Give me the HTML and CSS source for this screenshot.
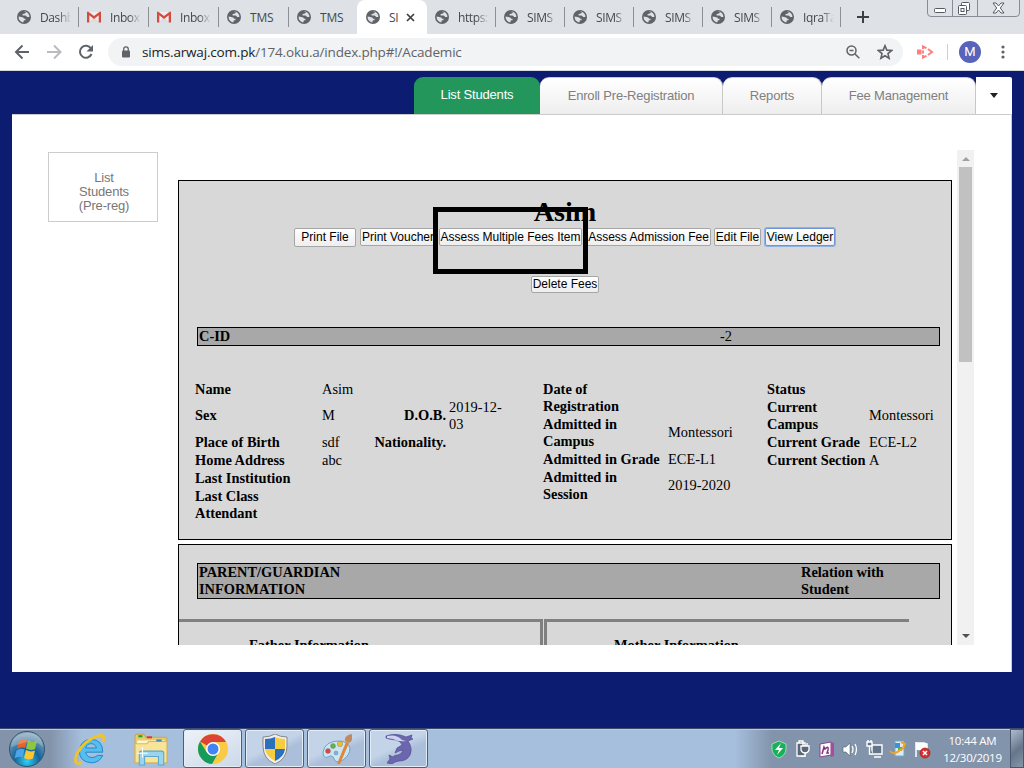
FILE: index.html
```html
<!DOCTYPE html>
<html lang="en">
<head>
<meta charset="utf-8">
<title>SIMS</title>
<link rel="stylesheet" href="styles.css">
</head>
<body>
<svg class="defs" width="0" height="0">
  <symbol id="globe" viewBox="0 0 14 14"><circle cx="7" cy="7" r="7" fill="#5f6368"/><path d="M1.600 6.600 4.300 6.900q2.300 0 2.900 1.900h1.300v1.400H6.900L6.300 12.500A5.600 5.600 0 0 1 1.600 6.600zM6.600 1.500h2.200v1.300L7.300 3.700 5.600 4.100v1.300h2.700q1.400.2 1.700 1.500h2.400a5.500 5.500 0 0 0-3.300-5z" fill="#dee1e6"/></symbol>
  <symbol id="gmail" viewBox="0 0 14 12"><path d="M1 1h12v10H1z" fill="#eee"/><path d="M2 11l5-5 5 5z" fill="#ddd"/><path d="M0 1.3Q0 .4 1 .4L7 5l6-4.6q1 0 1 .9V11.500h-2.300V4.300L7 7.900 2.300 4.300v7.200H0z" fill="#d54b3d"/></symbol>
</svg>
<header class="tabstrip">
  <div class="tab"><svg class="fav"><use href="#globe"/></svg><span>Dashb</span></div>
  <div class="tab"><svg class="fav mail"><use href="#gmail"/></svg><span>Inbox</span></div>
  <div class="tab"><svg class="fav mail"><use href="#gmail"/></svg><span>Inbox</span></div>
  <div class="tab"><svg class="fav"><use href="#globe"/></svg><span class="full">TMS</span></div>
  <div class="tab before"><svg class="fav"><use href="#globe"/></svg><span class="full">TMS</span></div>
  <div class="tab active"><svg class="fav"><use href="#globe"/></svg><span class="short">SI</span><svg class="close" viewBox="0 0 9 9"><path d="M1 1l7 7M8 1L1 8" stroke="#3c4043" stroke-width="1.700"/></svg></div>
  <div class="tab narrow"><svg class="fav"><use href="#globe"/></svg><span>https:</span></div>
  <div class="tab narrow"><svg class="fav"><use href="#globe"/></svg><span>SIMS</span></div>
  <div class="tab narrow"><svg class="fav"><use href="#globe"/></svg><span>SIMS</span></div>
  <div class="tab narrow"><svg class="fav"><use href="#globe"/></svg><span>SIMS</span></div>
  <div class="tab narrow"><svg class="fav"><use href="#globe"/></svg><span>SIMS</span></div>
  <div class="tab narrow"><svg class="fav"><use href="#globe"/></svg><span>IqraTa</span></div>
  <svg class="plus" viewBox="0 0 12 12"><path d="M6 0v12M0 6h12" stroke="#3c4043" stroke-width="2"/></svg>
  <svg class="winctl" viewBox="0 0 93 17"><path d="M.5 0v13q0 3.500 3.500 3.500h85q3.500 0 3.500-3.500V0M25.500 0v16M50.500 0v16" fill="none" stroke="#878c96"/><g fill="#fff" stroke="#555a63"><rect x="7.500" y="8.500" width="11" height="4" rx="1"/><rect x="34.500" y="2.500" width="8" height="8" rx="1"/><rect x="31.500" y="5.500" width="8" height="9" rx="1"/><rect x="34" y="8.500" width="3" height="3"/><path d="M66 3h3l2.500 3L74 3h3l-3.700 5 3.700 5h-3l-2.500-3-2.500 3h-3l3.700-5z"/></g></svg>
</header>
<div class="toolbar">
  <svg class="nav" viewBox="0 0 100 36"><g fill="none" stroke="#5f6368" stroke-width="2"><path d="M29 18H16M22.500 11.500L16 18l6.500 6.500"/><path d="M47 18h13M54 11.500l6.500 6.500-6.500 6.500" stroke="#b9bbbf"/><path d="M91 14.500a6 6 0 1 0 .5 5.500"/></g><path d="M93 11v6.500h-6.500z" fill="#5f6368"/></svg>
  <div class="omnibox">
    <svg class="lock" viewBox="0 0 8 12"><path d="M1.700 5V3.200a2.300 2.300 0 0 1 4.600 0V5" fill="none" stroke="#5f6368" stroke-width="1.300"/><rect y="4.500" width="8" height="7" rx="1" fill="#5f6368"/></svg>
    <div class="url"><b>sims.arwaj.com.pk</b>/174.oku.a/index.php#!/Academic</div>
    <svg class="mag" viewBox="0 0 14 14"><g fill="none" stroke="#5f6368" stroke-width="1.500"><circle cx="5.500" cy="5.500" r="4.500"/><path d="M3.500 5.500h4M9 9l4.300 4.300"/></g></svg>
    <svg class="star" viewBox="0 0 14 14"><path d="M7 1.500l1.600 3.900 4.200.3-3.200 2.700 1 4.100L7 10.300l-3.600 2.200 1-4.100L1.200 5.700l4.200-.3z" fill="none" stroke="#5f6368" stroke-width="1.400"/></svg>
  </div>
  <svg class="ext" viewBox="0 0 17 14"><path d="M0 4.500h4.500v5H0z" fill="#ff7f7f"/><path d="M6 4V1.500l3.500 1.700M11 4l4 3-4 3M6 10v2.500l3.500-1.700M6 5.500v3" fill="none" stroke="#ff7f7f" stroke-width="2"/></svg>
  <i class="sep"></i><div class="avatar">M</div>
  <svg class="dots" viewBox="0 0 4 14"><g fill="#5f6368"><circle cx="2" cy="2" r="1.600"/><circle cx="2" cy="7" r="1.600"/><circle cx="2" cy="12" r="1.600"/></g></svg>
</div>

<main class="page">
  <nav class="modules">
    <div class="mod on">List Students</div><div class="mod enroll">Enroll Pre-Registration</div><div class="mod reports">Reports</div><div class="mod fee">Fee Management</div><div class="more"><i class="down"></i></div>
  </nav>
  <div class="panel">
    <aside class="card">List<br>Students<br>(Pre-reg)</aside>
    <section class="view">
      <div class="box student">
        <h1>Asim</h1>
        <div class="actions"><button class="pf">Print File</button><button class="pv">Print Voucher</button><button class="am">Assess Multiple Fees Item</button><button class="aa">Assess Admission Fee</button><button class="ef">Edit File</button><button class="vl">View Ledger</button></div>
        <button class="del">Delete Fees</button>
        <div class="marker"></div>
        <div class="bar cid"><b>C-ID</b><span>-2</span></div>
        <div class="info">
          <div class="grid left">
            <b>Name</b><span>Asim</span><b></b><span></span>
            <b class="one">Sex</b><span class="one">M</span><b class="r one">D.O.B.</b><span>2019-12-<br>03</span>
            <b>Place of Birth</b><span>sdf</span><b class="r">Nationality.</b><span></span>
            <b>Home Address</b><span>abc</span><b></b><span></span>
            <b>Last Institution</b><span></span><b></b><span></span>
            <b>Last Class<br>Attendant</b><span></span><b></b><span></span>
          </div>
          <div class="grid mid">
            <b>Date of<br>Registration</b><span></span>
            <b>Admitted in<br>Campus</b><span class="one">Montessori</span>
            <b>Admitted in Grade</b><span>ECE-L1</span>
            <b>Admitted in<br>Session</b><span class="one">2019-2020</span>
          </div>
          <div class="grid right">
            <b>Status</b><span></span>
            <b>Current<br>Campus</b><span class="one">Montessori</span>
            <b>Current Grade</b><span>ECE-L2</span>
            <b>Current Section</b><span>A</span>
          </div>
        </div>
      </div>
      <div class="box parents">
        <div class="bar rel"><b>PARENT/GUARDIAN<br>INFORMATION</b><b>Relation with<br>Student</b></div>
        <div class="pair"><div class="father"><b>Father Information</b></div><div class="mother"><b>Mother Information</b></div></div>
      </div>
    </section>
    <div class="scroll"><i class="up"></i><div class="thumb"></div><i class="down"></i></div>
  </div>
</main>

<footer class="taskbar">
  <svg class="orb" viewBox="0 0 38 38"><defs><radialGradient id="o" cx=".5" cy=".85" r=".8"><stop offset="0" stop-color="#2fd0f5"/><stop offset=".45" stop-color="#13649a"/><stop offset="1" stop-color="#8fa9bd"/></radialGradient></defs><circle cx="19" cy="19" r="17.500" fill="url(#o)" stroke="#2c5671"/><path d="M11 11q4-3 8-1l-2 8q-4-2-8 1z" fill="#e8622c"/><path d="M20 10.500q5 2.500 9 .5l-2 8q-4 2-9-.500z" fill="#8ec641"/><path d="M8.500 20.500q4-3 8-1l-2 8q-4-2-8 1z" fill="#4aa6e8"/><path d="M18 20q4 2.500 9 .5l-2 8q-5 2-9-.500z" fill="#fcc531"/><path d="M3 17Q4 4 19 3t16 14Q27 10 19 12T3 17z" fill="#fff" opacity=".22"/></svg>
  <svg class="ie" viewBox="0 0 32 32"><path d="M28 19H12q1 5 6 5 3 0 5-2h5q-3 7-11 7Q6 28 6 18 7 7 17 7q11 0 11 12zM12 15h10q-1-4-5-4t-5 4z" fill="#55bdf0" stroke="#1781bd" stroke-width=".8"/><path d="M28.500 9q2.500-8-6-5Q11 8 4 20q-5 12 4 9" fill="none" stroke="#f4c420" stroke-width="2.500"/></svg>
  <svg class="folder" viewBox="0 0 32 32"><path d="M1 4q0-2 2-2h6l2 3h18q2 0 2 2v22H1z" fill="#eacb6a" stroke="#c9a94c"/><path d="M3 8h26v17H3z" fill="#fff6cc"/><path d="M1 11h11l2-2h17v20H1z" fill="#f7e39a" stroke="#d9b95b"/><path d="M4 3h4v2H4z" fill="#21a333"/><path d="M12 4h5v2h-5z" fill="#d64032"/><path d="M21 7h5v2h-5z" fill="#3489cf"/><path d="M5 31V20q0-2 2-2h19q2 0 2 2v11h-5v-8H10v8z" fill="#9bd4ee" stroke="#5da7cd"/><path d="M8 14v10M3 20h10" stroke="#fff"/></svg>
  <div class="task current"><svg viewBox="0 0 30 30"><circle cx="15" cy="15" r="15" fill="#f9cb45"/><path d="M15 15L2 7.500A15 15 0 0 1 28 8H15z" fill="#dc4437"/><path d="M2 7.500A15 15 0 0 0 14 30l6.500-11.500L15 21 8.500 18z" fill="#159b5a"/><circle cx="15" cy="15" r="7" fill="#fff"/><circle cx="15" cy="15" r="5.500" fill="#4384f4"/></svg></div>
  <div class="task"><svg viewBox="0 0 30 30"><path d="M15 0q5 3 12 3v9q0 13-12 18Q3 25 3 12V3q7 0 12-3z" fill="#eee" stroke="#888"/><path d="M15 3v12H5V5q6 0 10-2zM15 15h10q-1 8-10 12z" fill="#2b70bd"/><path d="M15 3q5 2 10 2v10H15zM5 15h10v12Q6 22 5 15z" fill="#f6cd3c"/></svg></div>
  <div class="task"><svg viewBox="0 0 30 30"><path d="M17 7Q3 7 1 18q0 7 5 5 5-3 6 2 2 5 9 1 7-5 7-12-2-7-11-7z" fill="#c9e6f7" stroke="#6da4c4"/><g stroke="#777" stroke-width=".4"><circle cx="6" cy="17" r="2.500" fill="#e0443c"/><circle cx="11" cy="12" r="2.500" fill="#63b246"/><circle cx="18" cy="10" r="2.700" fill="#f6bd2b"/><circle cx="14" cy="19" r="2" fill="#7cb4de"/></g><path d="M15 30l9-22 3 1-9 21z" fill="#e28535"/><path d="M23 7q-1-6 7-7 2 6-3 9z" fill="#c28b5d"/></svg></div>
  <div class="task"><svg viewBox="0 0 30 30"><path d="M2 2Q9-1 16 1q4 1 6 2l6-2-1 3 2 1-5 2q5 7 2 14-3 6-11 6l-4 1-3 2-5-1 3-4-1-4 4 2q1-2 5-2 4-1 5-5l-4 1-4 2 2-5 5-3Q17 7 12 6L5 5 2 4z" fill="#6b66ad" stroke="#514d8f" stroke-width=".7"/><path d="M3 2q10-2 15 4l4 1Q14 8 9 5L3 4z" fill="#ced3ed"/></svg></div>
  <div class="tray">
    <svg class="ticons" viewBox="0 0 164 24"><path d="M8 4l7 3v5q0 6-7 9-7-3-7-9V7z" fill="#17b15a" stroke="#c5eed5" stroke-width=".7"/><path d="M10 6l-6 7h4l-2 5 6-7H8z" fill="#fff"/><g fill="#596779" stroke="#fff" stroke-width="1.300"><path d="M26 6h8v13h-8zM28 4h4v2h-4z"/><path d="M30 9h8v4q-1 3-4 3t-4-3zM32 6v3M36 6v3M34 16v3h-4"/></g><path d="M49 7l11-2v13l-11 2z" fill="#fff" stroke="#85448b"/><path d="M60 5l3 1v13l-3 1z" fill="#a84c9c"/><path d="M51 17l2-7 1 2q4-4 3 1l-1 3h2" fill="none" stroke="#81327c" stroke-width="1.500"/><path d="M72 10h3l4-4v13l-4-4h-3z" fill="#fff" stroke="#566" stroke-width=".6"/><path d="M81 9q2 3 0 7M84 7q3 5 0 11" fill="none" stroke="#fff" stroke-width="1.300"/><g fill="#63758a" stroke="#fff" stroke-width="1.400"><path d="M101 8h10v9h-10zM103 20h7"/><path d="M96 5h5v4h-5zM97 3v2M100 3v2M98.500 9v8h3" /></g><path d="M124 4h9v15h-9z" fill="#d9edf8" stroke="#74a7c6"/><path d="M124 6h5v5h-5z" fill="#3a93da"/><path d="M127 10h4v4h-4z" fill="#62ad40"/><path d="M119 14q4 5 10-1l4-2M130 5l4 2-2 4" fill="none" stroke="#f5a41d" stroke-width="2"/><path d="M145 5v15M146 6h7l3 1v6h-3l-7-1z" fill="#fff" stroke="#fff" stroke-width="1.500"/><circle cx="154" cy="16" r="5" fill="#d9302c" stroke="#8d1b18" stroke-width=".6"/><path d="M152 14l4 4M156 14l-4 4" stroke="#fff" stroke-width="1.500"/></svg>
    <div class="clock">10:44 AM<br>12/30/2019</div>
    <div class="peek"></div>
  </div>
</footer>
</body>
</html>
```

FILE: styles.css
```css
* { box-sizing: border-box; }
body { margin: 0; width: 1024px; height: 768px; overflow: hidden; background: #0c1c71; display: flex; flex-direction: column; }
svg { display: block; flex: none; }
.defs { position: absolute; }

/* browser chrome */
.tabstrip { height: 34px; flex: none; background: #dee1e6; display: flex; padding-left: 9px; font: 12px "Open Sans", sans-serif; letter-spacing: -.4px; color: #45494d; }
.tab { width: 70px; height: 34px; display: flex; align-items: center; padding-left: 8px; position: relative; flex: none; }
.tab::after { content: ""; position: absolute; right: 0; top: 7px; width: 1px; height: 20px; background: #8c9096; }
.tab.before { width: 68px; }
.tab.before::after, .tab.active::after { display: none; }
.tab.narrow { width: 69px; }
.tab.active { background: #fff; border-radius: 8px 8px 0 0; padding-left: 9px; }
.fav { width: 14px; height: 14px; margin-right: 9px; }
.fav.mail { height: 12px; }
.tab span { width: 31px; overflow: hidden; white-space: nowrap; -webkit-mask-image: linear-gradient(90deg, #000 60%, transparent 100%); mask-image: linear-gradient(90deg, #000 60%, transparent 100%); }
.tab span.full { -webkit-mask-image: none; mask-image: none; letter-spacing: -.2px; }
.tab span.short { width: 11px; -webkit-mask-image: none; mask-image: none; }
.close { width: 9px; height: 9px; margin-left: 6px; }
.plus { width: 12px; height: 12px; margin: 11px 0 0 16px; }
.winctl { width: 93px; height: 17px; margin-left: 58px; }
.toolbar { height: 37px; flex: none; background: #fff; border-bottom: 1px solid #d4dadd; display: flex; align-items: center; }
.nav { width: 100px; height: 36px; }
.omnibox { width: 795px; height: 28px; margin-left: 8px; background: #f1f3f4; border-radius: 14px; display: flex; align-items: center; padding-left: 14px; }
.lock { width: 8px; height: 12px; }
.url { font: 13.500px "Open Sans", sans-serif; color: #5f6368; width: 704px; margin-left: 12px; white-space: nowrap; letter-spacing: -.18px; }
.url b { font-weight: 400; color: #202124; }
.mag { width: 14px; height: 14px; }
.star { width: 16px; height: 16px; margin-left: 17px; }
.ext { width: 17px; height: 14px; margin-left: 14px; }
.sep { width: 1px; height: 16px; background: #ccd; margin-left: 13px; }
.avatar { width: 22px; height: 22px; border-radius: 50%; background: #5764b9; color: #fff; font: 13px/22px Roboto, sans-serif; text-align: center; margin-left: 11px; }
.dots { width: 4px; height: 14px; margin-left: 20px; }

/* application */
.page { height: 657px; flex: none; padding: 6px 12px 0; }
.modules { display: flex; height: 37px; justify-content: flex-end; font: 13px/37px "Liberation Sans", sans-serif; letter-spacing: -.18px; color: #808080; text-align: center; }
.mod { background: linear-gradient(#fff, #eee); border-radius: 9px 9px 0 0; border: 1px solid #c8c8c8; border-width: 1px 1px 0 0; height: 37px; white-space: nowrap; line-height: 36px; }
.mod.on { width: 126px; background: #23965b; color: #fff; border: 0; line-height: 35px; }
.enroll { width: 183px; }
.reports { width: 99px; }
.fee { width: 154px; }
.more { width: 36px; background: #fff; border-radius: 0 2px 0 0; display: flex; align-items: center; justify-content: center; }
.down { border: 4.500px solid transparent; border-top: 5px solid #222; border-bottom: 0; }
.panel { height: 558px; background: #fff; border-top: 1px solid #ccc; border-right: 1px solid #ccc; display: flex; padding: 35px 0 0 36px; }
.card { width: 110px; height: 70px; margin-top: 2px; border: 1px solid #ccc; color: #777; font: 13px/14px "Liberation Sans", sans-serif; letter-spacing: -.18px; text-align: center; padding-top: 18px; padding-left: 2px; }
.view { width: 779px; height: 495px; overflow: hidden; margin-left: 20px; padding-top: 30px; font: 14.400px/17px "Liberation Serif", serif; color: #000; }
.box { width: 774px; background: #d8d8d8; border: 1px solid #000; position: relative; }
.student { height: 360px; }
h1 { font-size: 28.200px; line-height: 32px; margin: 0; padding-top: 15px; text-align: center; }
.actions { display: flex; align-items: flex-start; padding-left: 115px; height: 48px; }
button { height: 17px; flex: none; padding: 0; border: 1px solid #a6a6a6; border-radius: 2px; background: linear-gradient(#fff, #eee); font: 12px/15px "Liberation Sans", sans-serif; color: #000; white-space: nowrap; text-align: center; }
.actions button { height: 18px; line-height: 16px; }
.actions .pf { width: 62px; height: 19px; padding-bottom: 2px; }
.pv { width: 76px; margin-left: 4px; }
.am { width: 143px; margin-left: 3px; }
.aa { width: 125px; margin-left: 4px; }
.ef { width: 47px; margin-left: 3px; }
.vl { width: 70px; margin-left: 4px; border-color: #6e94d8; box-shadow: 0 0 0 1px #8eb1ea; }
.del { display: block; width: 68px; margin-left: 352px; }
.marker { position: absolute; left: 254px; top: 26px; width: 155px; height: 67px; border: 5px solid #000; }
.bar { width: 743px; margin-left: 18px; background: #a8a8a8; border: 1px solid #000; display: flex; padding-left: 1px; }
.cid { height: 19px; margin-top: 34px; }
.cid b { width: 521px; }
.info { display: flex; padding: 35px 0 0 16px; }
.grid { display: grid; row-gap: 1px; align-items: center; align-content: start; grid-auto-rows: minmax(17px, auto); white-space: nowrap; }
.grid .one { padding-bottom: 1px; }
.left { width: 348px; grid-template-columns: 127px 124px 97px; grid-template-columns: 127px 30px 94px 97px; }
.left > :nth-child(4n) { padding-left: 3px; }
.left .r { text-align: right; display: flex; justify-content: flex-end; }
.mid { width: 224px; grid-template-columns: 125px 99px; }
.right { grid-template-columns: 102px 80px; }
.parents { margin-top: 4px; height: 200px; padding-top: 18px; }
.rel { height: 36px; }
.rel b:first-child { width: 602px; }
.pair { display: flex; gap: 1px; margin-top: 20px; width: 730px; height: 100px; }
.father, .mother { border-top: 3px solid #808080; padding-top: 15px; }
.father { width: 364px; border-right: 3px solid #808080; padding-left: 70px; }
.mother { width: 365px; border-left: 3px solid #808080; padding-left: 67px; }
.scroll { width: 17px; height: 495px; background: #f1f1f1; display: flex; flex-direction: column; align-items: center; }
.scroll .up { border: 4px solid transparent; border-bottom: 4px solid #a0a0a0; border-top: 0; margin-top: 7px; }
.thumb { width: 13px; height: 195px; background: #c1c1c1; margin-top: 6px; }
.scroll .down { margin-top: auto; margin-bottom: 7px; border-width: 4px 4px 0; border-top-color: #505050; }

/* desktop taskbar */
.taskbar { height: 40px; flex: none; border-top: 1px solid #3d4a6e; box-shadow: inset 0 1px #b9cbe0; background: linear-gradient(90deg, #8293aa 0, #8293aa 50px, #a6bfdd 82px, #a6bfdd 735px, #8194ab 772px, #8194ab 100%); display: flex; align-items: center; padding-left: 8px; }
.orb { width: 38px; height: 38px; }
.ie { width: 34px; height: 34px; margin-left: 27px; }
.folder { width: 34px; height: 34px; margin-left: 27px; }
.task { width: 59px; height: 39px; margin-left: 3px; border: 1px solid #4c5e79; border-radius: 3px; box-shadow: inset 0 0 0 1px #e3edf8; background: linear-gradient(155deg, #c3d3e8 0 45%, #abbfda 60%); display: flex; align-items: center; justify-content: center; }
.task.current { width: 59px; margin-left: 15px; background: linear-gradient(155deg, #eef2f8, #cbd8e9); }
.task svg { width: 30px; height: 30px; }
.tray { margin-left: auto; display: flex; align-items: center; }
.ticons { width: 164px; height: 24px; }
.clock { width: 75px; color: #fff; font: 11.500px/17px "Open Sans", sans-serif; text-align: center; letter-spacing: -.25px; margin: 0; }
.peek { width: 14px; height: 39px; border: 1px solid #4a586d; background: linear-gradient(140deg, #aebccd, #65758a 55%, #8797aa); }
```
